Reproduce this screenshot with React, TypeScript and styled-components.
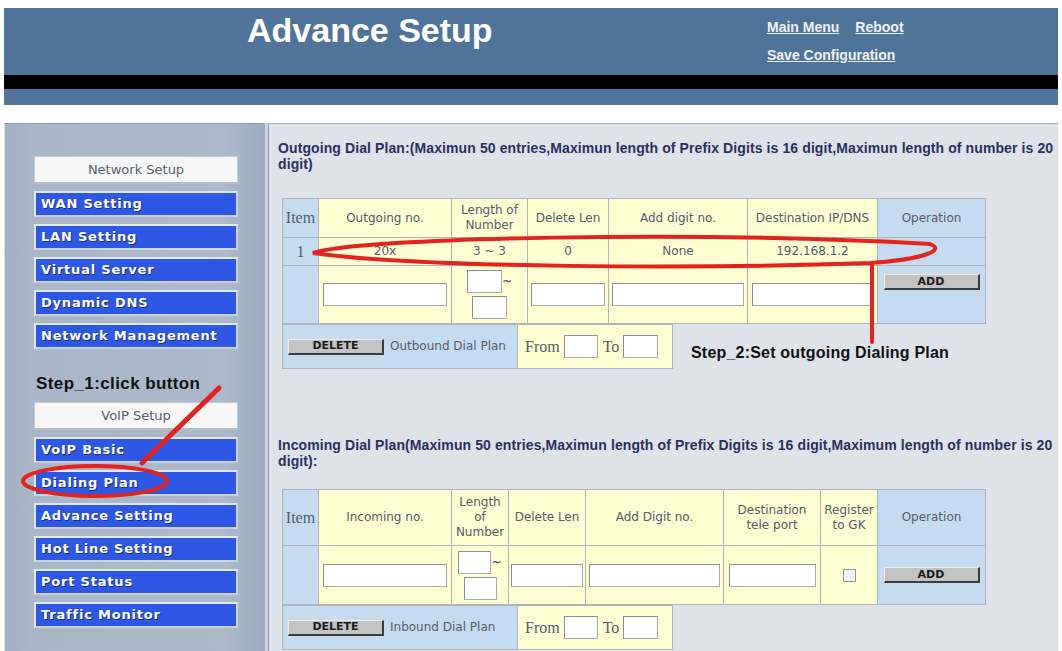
import React from "react";
import styled, { createGlobalStyle } from "styled-components";

const GlobalStyle = createGlobalStyle`
  html, body { margin: 0; padding: 0; background: #fff; }
  body { font-family: "Liberation Sans", Arial, sans-serif; }
  * { box-sizing: border-box; }
`;

const Page = styled.div`
  position: relative;
  width: 1062px;
  height: 651px;
  overflow: hidden;
  padding: 8px 4px 0 4px;
`;

const Header = styled.header`
  height: 67px;
  background: #50739a;
  display: flex;
  align-items: flex-start;
  padding-left: 243px;
`;

const Title = styled.h1`
  margin: 5px 0 0;
  width: 520px;
  font: bold 34px/34px "Liberation Sans", Arial, sans-serif;
  color: #fff;
`;

const Links = styled.nav`
  margin-top: 11px;
  display: flex;
  flex-direction: column;
  gap: 12px;
`;

const LinkRow = styled.div`
  display: flex;
  gap: 16px;
`;

const TopLink = styled.a`
  font: bold 14px/16px "Liberation Sans", Arial, sans-serif;
  color: #eef2f8;
  text-decoration: underline;
  cursor: pointer;
`;

const Band = styled.div<{ $h: number; $bg: string }>`
  height: ${(p) => p.$h}px;
  background: ${(p) => p.$bg};
`;

const Body = styled.div`
  display: flex;
  height: 528px;
  background: #cfd6df;
`;

const Sidebar = styled.aside`
  width: 261px;
  padding: 32px 0 0 29px;
  border-top: 1px solid #8c9bb0;
  border-left: 1px solid #d8dde4;
  background: linear-gradient(to right, #a2b1c4, #a9b7c9 12%, #abb9ca 85%, #9babbf);
  display: flex;
  flex-direction: column;
`;

const SectionHead = styled.div`
  width: 204px;
  height: 28px;
  background: #f7f7f7;
  border: 1px solid #c4c9d0;
  border-bottom: 2px solid #b6bcc5;
  text-align: center;
  font: 13px/25px "DejaVu Sans", Verdana, sans-serif;
  color: #59606a;
`;

const NavButton = styled.a`
  display: block;
  width: 204px;
  height: 26px;
  margin-top: 7px;
  border: 2px solid #e4e8ee;
  border-right-color: #cdd3db;
  border-bottom-color: #cdd3db;
  background: #2d58e6;
  padding-left: 5px;
  font: bold 13px/22px "DejaVu Sans", Verdana, sans-serif;
  letter-spacing: 0.8px;
  color: #fff;
  text-shadow: 1px 1px 0 #1b2f7a;
  white-space: nowrap;
  overflow: hidden;
  cursor: pointer;
`;

const StepLabel = styled.div`
  margin: 24px 0 7px 2px;
  font: bold 17px/22px "Liberation Sans", Arial, sans-serif;
  letter-spacing: 0.4px;
  color: #111;
  white-space: nowrap;
`;

const Main = styled.main`
  flex: 1;
  margin-left: 3px;
  background: #dee3ea;
  border-left: 1px solid #8e98a6;
  border-top: 1px solid #a2aab6;
  padding: 16px 0 0 9px;
`;

const Heading = styled.p<{ $gap: number }>`
  margin: 0 0 ${(p) => p.$gap}px;
  font: bold 14px/16px "Liberation Sans", Arial, sans-serif;
  letter-spacing: 0.1px;
  color: #2a3062;
  white-space: nowrap;
`;

const Grid = styled.table`
  border-collapse: collapse;
  table-layout: fixed;
  margin-left: 4px;
  font: 12px/15px "DejaVu Sans", Verdana, sans-serif;
  color: #555b6c;
  border: 1px solid #a3a9b3;
`;

const Col = styled.col<{ $w: number }>`
  width: ${(p) => p.$w}px;
`;

const Row = styled.tr<{ $h: number }>`
  height: ${(p) => p.$h}px;
`;

const Cell = styled.td<{ $tone?: "blue" | "yellow"; $top?: boolean; $left?: boolean }>`
  border: 1px solid #b0b5bd;
  background: ${(p) => (p.$tone === "blue" ? "#c5dbef" : "#fffed3")};
  text-align: ${(p) => (p.$left ? "left" : "center")};
  vertical-align: ${(p) => (p.$top ? "top" : "middle")};
  padding: ${(p) => (p.$top ? "8px 0 0" : "0")};
`;

const Serif = styled.span`
  font: 16px "Liberation Serif", "Times New Roman", serif;
`;

const Field = styled.input<{ $w: number }>`
  width: ${(p) => p.$w}px;
  height: 23px;
  margin: 0;
  padding: 0 2px;
  vertical-align: middle;
  background: #fff;
  border: 1px solid #a8abb0;
  border-top-color: #8a8d92;
  border-left-color: #8a8d92;
`;

const Tilde = styled.span`
  display: inline-block;
  width: 11px;
  font-weight: bold;
  vertical-align: middle;
`;

const Btn = styled.button`
  width: 96px;
  height: 16px;
  padding: 0;
  background: #c3c3c3;
  border: 1px solid;
  border-color: #ececec #3c3c3c #3c3c3c #ececec;
  border-width: 1px 2px 2px 1px;
  font: bold 11px/12px "DejaVu Sans", Verdana, sans-serif;
  color: #1c1c1c;
  vertical-align: middle;
`;

const Check = styled.input`
  appearance: none;
  width: 13px;
  height: 13px;
  margin: 0;
  border: 1px solid #8f949b;
  background: #f2f5f8;
  vertical-align: middle;
`;

const FooterLine = styled.div`
  display: flex;
  align-items: flex-end;
`;

const Step2 = styled.div`
  margin: 0 0 6px 18px;
  font: bold 16px/20px "Liberation Sans", Arial, sans-serif;
  letter-spacing: 0.2px;
  color: #111;
  white-space: nowrap;
`;

const FooterLabel = styled.span`
  margin-left: 6px;
  vertical-align: middle;
`;

const RangeText = styled.span`
  font: 16px "Liberation Serif", "Times New Roman", serif;
  color: #555b6c;
  vertical-align: middle;
  margin: 0 4px 0 0;
`;

const Annotations = styled.svg`
  position: absolute;
  left: 0;
  top: 0;
  pointer-events: none;
`;

const networkItems = ["WAN Setting", "LAN Setting", "Virtual Server", "Dynamic DNS", "Network Management"];
const voipItems = ["VoIP Basic", "Dialing Plan", "Advance Setting", "Hot Line Setting", "Port Status", "Traffic Monitor"];

function Footer({ label }: { label: string }) {
  return (
    <Grid>
      <colgroup>
        <Col $w={235} />
        <Col $w={155} />
      </colgroup>
      <tbody>
        <Row $h={44}>
          <Cell $tone="blue" $left style={{ paddingLeft: 5 }}>
            <Btn>DELETE</Btn>
            <FooterLabel>{label}</FooterLabel>
          </Cell>
          <Cell $left style={{ paddingLeft: 7 }}>
            <RangeText>From</RangeText>
            <Field $w={34} />
            <RangeText style={{ marginLeft: 5 }}>To</RangeText>
            <Field $w={35} />
          </Cell>
        </Row>
      </tbody>
    </Grid>
  );
}

export default function App() {
  return (
    <Page>
      <GlobalStyle />
      <Header>
        <Title>Advance Setup</Title>
        <Links>
          <LinkRow>
            <TopLink>Main Menu</TopLink>
            <TopLink>Reboot</TopLink>
          </LinkRow>
          <LinkRow>
            <TopLink>Save Configuration</TopLink>
          </LinkRow>
        </Links>
      </Header>
      <Band $h={14} $bg="#000" />
      <Band $h={16} $bg="#52759b" />
      <Band $h={18} $bg="#fff" />
      <Body>
        <Sidebar>
          <SectionHead>Network Setup</SectionHead>
          {networkItems.map((n) => (
            <NavButton key={n}>{n}</NavButton>
          ))}
          <StepLabel>Step_1:click button</StepLabel>
          <SectionHead>VoIP Setup</SectionHead>
          {voipItems.map((n) => (
            <NavButton key={n}>{n}</NavButton>
          ))}
        </Sidebar>
        <Main>
          <Heading $gap={26}>
            Outgoing Dial Plan:(Maximun 50 entries,Maximun length of Prefix Digits is 16 digit,Maximun length of number is 20
            <br />
            digit)
          </Heading>
          <Grid>
            <colgroup>
              <Col $w={36} />
              <Col $w={133} />
              <Col $w={76} />
              <Col $w={81} />
              <Col $w={139} />
              <Col $w={130} />
              <Col $w={108} />
            </colgroup>
            <tbody>
              <Row $h={39}>
                <Cell $tone="blue"><Serif>Item</Serif></Cell>
                <Cell>Outgoing no.</Cell>
                <Cell>Length of Number</Cell>
                <Cell>Delete Len</Cell>
                <Cell>Add digit no.</Cell>
                <Cell>Destination IP/DNS</Cell>
                <Cell $tone="blue">Operation</Cell>
              </Row>
              <Row $h={28}>
                <Cell $tone="blue"><Serif>1</Serif></Cell>
                <Cell>20x</Cell>
                <Cell>3 ~ 3</Cell>
                <Cell>0</Cell>
                <Cell>None</Cell>
                <Cell>192.168.1.2</Cell>
                <Cell $tone="blue" />
              </Row>
              <Row $h={58}>
                <Cell $tone="blue" />
                <Cell><Field $w={124} /></Cell>
                <Cell>
                  <Field $w={35} />
                  <Tilde>~</Tilde>
                  <br />
                  <Field $w={35} style={{ marginTop: 3 }} />
                </Cell>
                <Cell><Field $w={74} /></Cell>
                <Cell><Field $w={132} /></Cell>
                <Cell><Field $w={122} /></Cell>
                <Cell $tone="blue" $top><Btn>ADD</Btn></Cell>
              </Row>
            </tbody>
          </Grid>
          <FooterLine>
            <Footer label="Outbound Dial Plan" />
            <Step2>Step_2:Set outgoing Dialing Plan</Step2>
          </FooterLine>
          <Heading $gap={20} style={{ marginTop: 68 }}>
            Incoming Dial Plan(Maximun 50 entries,Maximun length of Prefix Digits is 16 digit,Maximum length of number is 20
            <br />
            digit):
          </Heading>
          <Grid>
            <colgroup>
              <Col $w={36} />
              <Col $w={133} />
              <Col $w={57} />
              <Col $w={77} />
              <Col $w={138} />
              <Col $w={97} />
              <Col $w={57} />
              <Col $w={108} />
            </colgroup>
            <tbody>
              <Row $h={56}>
                <Cell $tone="blue"><Serif>Item</Serif></Cell>
                <Cell>Incoming no.</Cell>
                <Cell>Length of Number</Cell>
                <Cell>Delete Len</Cell>
                <Cell>Add Digit no.</Cell>
                <Cell>Destination<br />tele port</Cell>
                <Cell>Register to GK</Cell>
                <Cell $tone="blue">Operation</Cell>
              </Row>
              <Row $h={59}>
                <Cell $tone="blue" />
                <Cell><Field $w={124} /></Cell>
                <Cell>
                  <Field $w={33} />
                  <Tilde>~</Tilde>
                  <br />
                  <Field $w={33} style={{ marginTop: 3 }} />
                </Cell>
                <Cell><Field $w={72} /></Cell>
                <Cell><Field $w={131} /></Cell>
                <Cell><Field $w={87} /></Cell>
                <Cell><Check type="checkbox" /></Cell>
                <Cell $tone="blue"><Btn>ADD</Btn></Cell>
              </Row>
            </tbody>
          </Grid>
          <Footer label="Inbound Dial Plan" />
        </Main>
      </Body>
      <Annotations width={1062} height={651} viewBox="0 0 1062 651">
        <g fill="none" stroke="#e3231d" strokeWidth={4} strokeLinecap="round">
          <path d="M 313 253 C 360 237, 700 231, 930 244 C 946 250, 925 259, 870 263 C 700 269, 420 268, 313 253 Z" />
          <path d="M 872 263 L 872 342" />
          <ellipse cx={95} cy={481} rx={72} ry={15} />
          <path d="M 219 388 L 142 463" strokeWidth={5} />
        </g>
      </Annotations>
    </Page>
  );
}
